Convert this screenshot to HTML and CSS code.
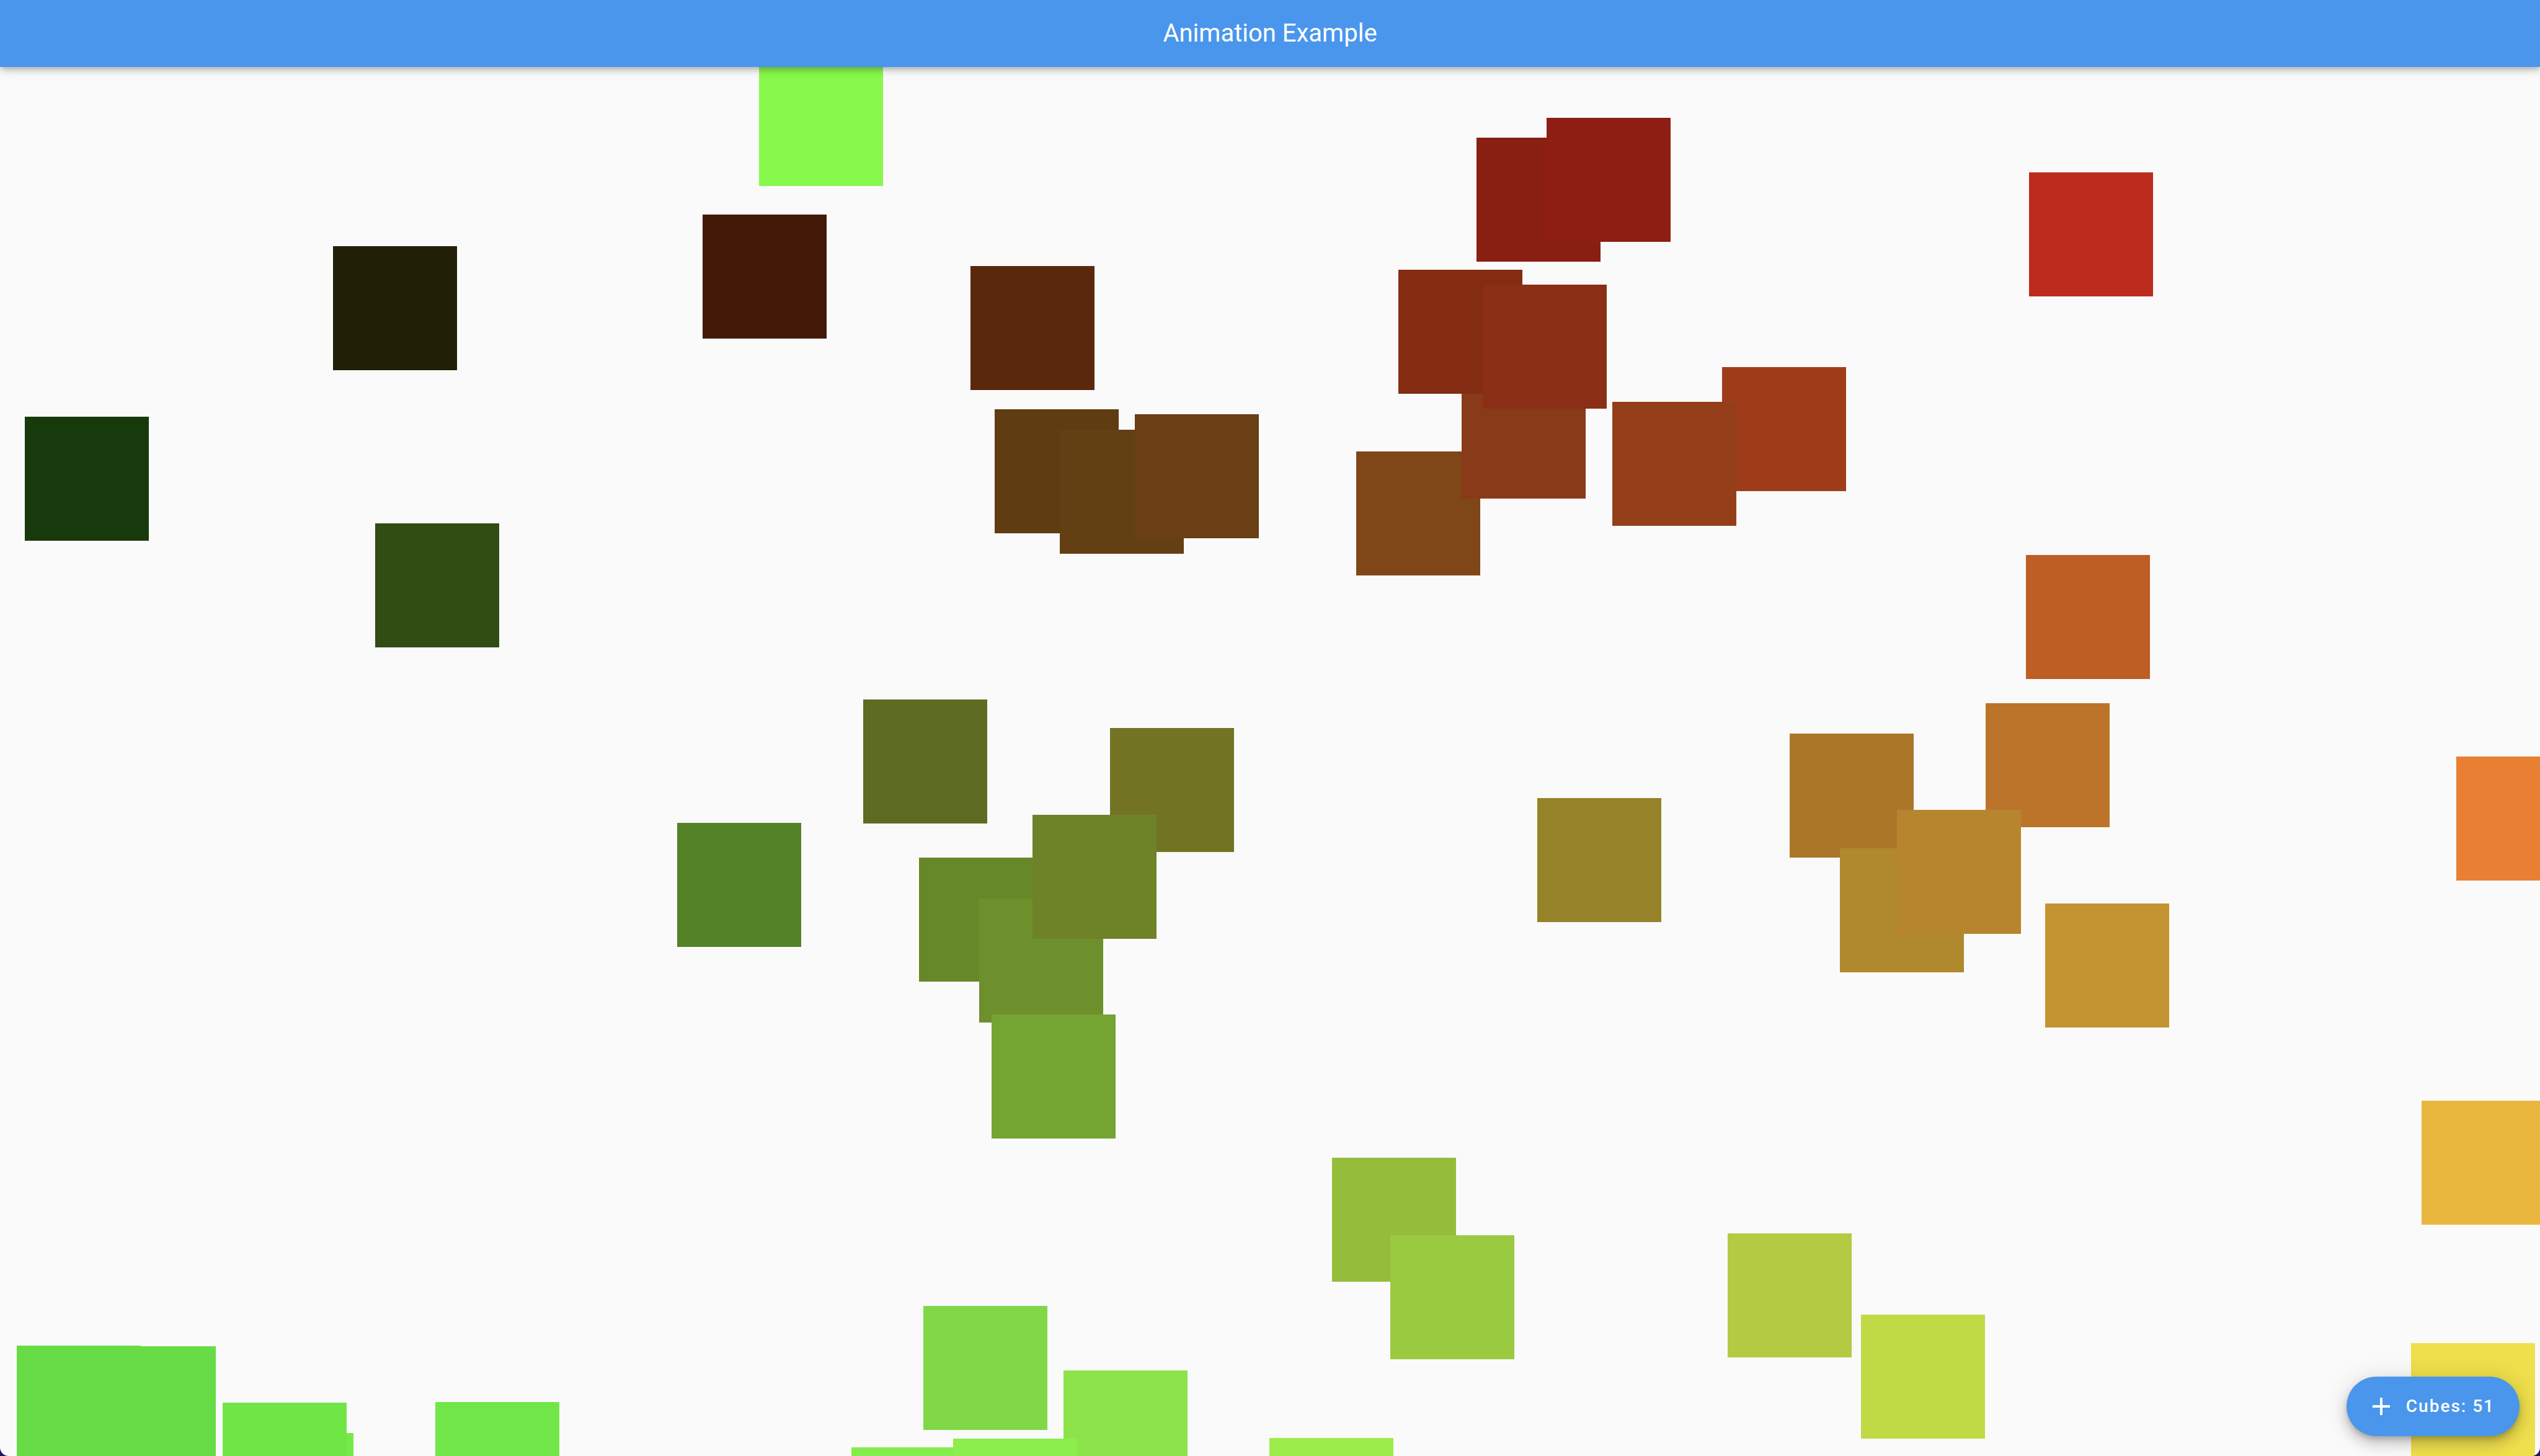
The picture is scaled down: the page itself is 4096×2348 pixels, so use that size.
FILE: index.html
```html
<!DOCTYPE html>
<html lang="en">
<head>
<meta charset="utf-8">
<title>Animation Example</title>
<link rel="stylesheet" href="styles.css">
</head>
<body>
<div class="window">
  <header class="appbar"><h1 class="title">Animation Example</h1></header>
  <main class="stage">
    <div class="cube" style="left:1224px;top:100px;background:#89f84d"></div>
    <div class="cube" style="left:537px;top:397px;background:#221f07"></div>
    <div class="cube" style="left:1133px;top:346px;background:#431a08"></div>
    <div class="cube" style="left:1565px;top:429px;background:#5a280c"></div>
    <div class="cube" style="left:40px;top:672px;background:#173a0d"></div>
    <div class="cube" style="left:605px;top:844px;background:#314d14"></div>
    <div class="cube" style="left:2381px;top:222px;background:#891e12"></div>
    <div class="cube" style="left:2494px;top:190px;background:#8e1e14"></div>
    <div class="cube" style="left:3272px;top:278px;background:#bc2c1c"></div>
    <div class="cube" style="left:2187px;top:728px;background:#7f4618"></div>
    <div class="cube" style="left:2357px;top:604px;background:#883a19"></div>
    <div class="cube" style="left:2255px;top:435px;background:#832c11"></div>
    <div class="cube" style="left:2391px;top:459px;background:#8a2f16"></div>
    <div class="cube" style="left:2777px;top:592px;background:#9f3d1b"></div>
    <div class="cube" style="left:2600px;top:648px;background:#943f19"></div>
    <div class="cube" style="left:1604px;top:660px;background:#5f3c12"></div>
    <div class="cube" style="left:1709px;top:693px;background:#634014"></div>
    <div class="cube" style="left:1830px;top:668px;background:#6a3f14"></div>
    <div class="cube" style="left:3267px;top:895px;background:#be5e24"></div>
    <div class="cube" style="left:3961px;top:1220px;background:#e87f32"></div>
    <div class="cube" style="left:1392px;top:1128px;background:#5d6c20"></div>
    <div class="cube" style="left:1790px;top:1174px;background:#727424"></div>
    <div class="cube" style="left:2479px;top:1287px;background:#968228"></div>
    <div class="cube" style="left:2886px;top:1183px;background:#ab7628"></div>
    <div class="cube" style="left:3202px;top:1134px;background:#bc742a"></div>
    <div class="cube" style="left:2967px;top:1368px;background:#b0882e"></div>
    <div class="cube" style="left:3059px;top:1306px;background:#b6852e"></div>
    <div class="cube" style="left:3298px;top:1457px;background:#c49432"></div>
    <div class="cube" style="left:1092px;top:1327px;background:#548226"></div>
    <div class="cube" style="left:1482px;top:1383px;background:#678828"></div>
    <div class="cube" style="left:1579px;top:1449px;background:#6d8f2c"></div>
    <div class="cube" style="left:1665px;top:1314px;background:#6e8228"></div>
    <div class="cube" style="left:1599px;top:1636px;background:#74a432"></div>
    <div class="cube" style="left:3905px;top:1775px;background:#eab73e"></div>
    <div class="cube" style="left:2148px;top:1867px;background:#96bc3c"></div>
    <div class="cube" style="left:2242px;top:1992px;background:#9aca40"></div>
    <div class="cube" style="left:2786px;top:1989px;background:#b4ca42"></div>
    <div class="cube" style="left:3001px;top:2120px;background:#c0da46"></div>
    <div class="cube" style="left:3888px;top:2166px;background:#efdf4c"></div>
    <div class="cube" style="left:148px;top:2171px;background:#68dc46"></div>
    <div class="cube" style="left:27px;top:2170px;background:#68dc46"></div>
    <div class="cube" style="left:370px;top:2311px;background:#74ea48"></div>
    <div class="cube" style="left:359px;top:2262px;background:#6fe646"></div>
    <div class="cube" style="left:702px;top:2261px;background:#70e648"></div>
    <div class="cube" style="left:1489px;top:2106px;background:#80d848"></div>
    <div class="cube" style="left:1715px;top:2210px;background:#8ce44a"></div>
    <div class="cube" style="left:1373px;top:2334px;background:#84ec4c"></div>
    <div class="cube" style="left:1537px;top:2320px;background:#8cee4c"></div>
    <div class="cube" style="left:2047px;top:2319px;background:#9ced4c"></div>
  </main>
  <button class="fab" type="button">
    <svg class="fab-icon" viewBox="0 0 24 24" aria-hidden="true"><path d="M19 13h-6v6h-2v-6H5v-2h6V5h2v6h6v2z"/></svg>
    <span class="fab-label">Cubes: 51</span>
  </button>
</div>
</body>
</html>
```

FILE: styles.css
```css
html, body {
  margin: 0;
  padding: 0;
}
body {
  background: #1f1563;
  width: 4096px;
  height: 2348px;
  overflow: hidden;
  font-family: Roboto, "Noto Sans", "Liberation Sans", sans-serif;
}
.window {
  position: relative;
  width: 4096px;
  height: 2348px;
  background: #fafafa;
  border-radius: 0 0 14px 14px;
  overflow: hidden;
}
.appbar {
  position: relative;
  z-index: 2;
  height: 108px;
  background: #4996ec;
  display: flex;
  align-items: center;
  justify-content: center;
  box-shadow: 0 4px 8px -2px rgba(0,0,0,0.2), 0 8px 10px 0 rgba(0,0,0,0.10), 0 2px 20px 0 rgba(0,0,0,0.08);
}
.title {
  margin: 0;
  color: #ffffff;
  font-size: 40px;
  font-weight: 400;
  line-height: 1;
  letter-spacing: 0;
}
.stage {
  position: absolute;
  inset: 0;
  z-index: 1;
}
.cube {
  position: absolute;
  width: 200px;
  height: 200px;
}
.fab {
  position: absolute;
  z-index: 3;
  right: 33px;
  bottom: 32px;
  height: 96px;
  padding: 0 40px 0 32px;
  border: none;
  border-radius: 48px;
  background: #4996ec;
  color: #ffffff;
  display: flex;
  align-items: center;
  gap: 16px;
  font-family: Roboto, "Noto Sans", "Liberation Sans", sans-serif;
  box-shadow: 0 12px 20px 2px rgba(0,0,0,0.14), 0 2px 36px 4px rgba(0,0,0,0.10), 0 6px 10px -2px rgba(0,0,0,0.2);
}
.fab-icon {
  width: 48px;
  height: 48px;
  fill: #ffffff;
  flex: none;
}
.fab-label {
  font-size: 28px;
  font-weight: 500;
  letter-spacing: 2px;
  line-height: 1;
}
```
